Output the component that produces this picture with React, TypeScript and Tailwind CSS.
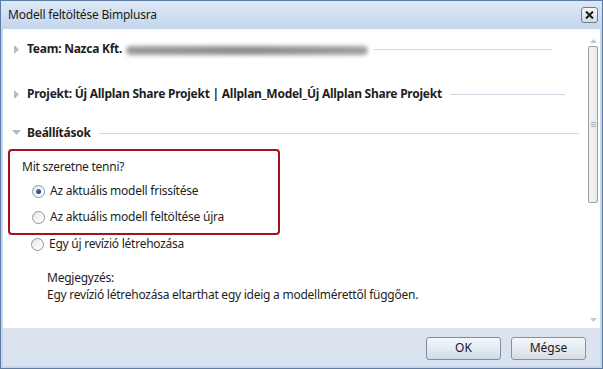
import React from "react";

function Arrow({ open }: { open?: boolean }) {
  return open ? (
    <svg width="9" height="6" viewBox="0 0 9 6" className="shrink-0">
      <path d="M0 0 L9 0 L4.5 5 Z" fill="#b4b9c2" />
    </svg>
  ) : (
    <svg width="5" height="9" viewBox="0 0 5 9" className="shrink-0">
      <path d="M0 0 L5 4.5 L0 9 Z" fill="#b4b9c2" />
    </svg>
  );
}

function Radio({ checked, label }: { checked?: boolean; label: string }) {
  return (
    <div className="flex items-center gap-[5px] h-[20px]">
      <div className="w-[13px] h-[13px] rounded-full border border-[#8d949e] bg-gradient-to-br from-[#dfe3e8] via-[#f3f4f6] to-[#ffffff] flex items-center justify-center shadow-[inset_0_0_1px_#ffffff]">
        {checked ? (
          <div className="w-[5px] h-[5px] rounded-full bg-gradient-to-br from-[#5a7fb8] to-[#1a3566]" />
        ) : null}
      </div>
      <span>{label}</span>
    </div>
  );
}

function SectionHeader({
  label,
  open,
  lineStart,
  lineEnd,
  children,
}: {
  label: string;
  open?: boolean;
  lineStart?: string;
  lineEnd: string;
  children?: React.ReactNode;
}) {
  return (
    <div className="flex items-center h-[20px]">
      <div className="w-[24px] flex justify-center pl-[2px]">
        <Arrow open={open} />
      </div>
      <span className="font-bold whitespace-nowrap">{label}</span>
      {children}
      <div className={`h-px bg-[#cfd7e2] ${lineStart ?? "ml-[8px]"} ${lineEnd}`} />
    </div>
  );
}

export default function App() {
  return (
    <div
      className="w-[603px] h-[369px] flex flex-col bg-[#c5d6ec] border border-[#5d7ca4] text-[12px] text-[#1e1e1e] overflow-hidden"
      style={{ fontFamily: '"Noto Sans", "Open Sans", sans-serif' }}
    >
      {/* title bar */}
      <div className="h-[28px] shrink-0 flex items-center justify-between pl-[7px] pr-[4px] bg-gradient-to-b from-[#dde8f5] to-[#c5d6ec]">
        <span className="text-[12px] text-[#1a1a1a] tracking-[-0.2px]">Modell feltöltése Bimplusra</span>
        <div className="w-[17px] h-[16px] rounded-[3px] border border-[#6e7c8e] bg-gradient-to-b from-[#f4f7fb] to-[#d3dde9] flex items-center justify-center">
          <svg width="9" height="8" viewBox="0 0 9 8">
            <path d="M1 0.5 L8 7.5 M8 0.5 L1 7.5" stroke="#1a1a1a" strokeWidth="2" />
          </svg>
        </div>
      </div>

      {/* body */}
      <div className="flex-1 flex flex-col mx-[2px] bg-white">
        <div className="flex-1 flex">
          <div className="flex-1 pt-[8px] tracking-[-0.25px]">
            <div className="pt-[2px]">
              <SectionHeader label="Team: Nazca Kft." lineEnd="w-[178px]" lineStart="ml-[6px]">
                <div className="ml-[4px] flex flex-col justify-center mt-[2px]">
                  <div className="w-[242px] h-[9px] rounded-full bg-gradient-to-r from-[#9a9a9a] via-[#8c8c8c] to-[#a0a0a0] blur-[2px]" />
                </div>
              </SectionHeader>
            </div>
            <div className="pt-[25px]">
              <SectionHeader
                label="Projekt: Új Allplan Share Projekt | Allplan_Model_Új Allplan Share Projekt"
                lineEnd="w-[115px]"
              />
            </div>
            <div className="pt-[19px]">
              <SectionHeader label="Beállítások" open lineEnd="w-[480px]" />
            </div>

            <div className="mt-[6px] ml-[5px] w-[272px] h-[86px] border-2 border-[#a8101c] rounded-[4px] pl-[12px] pt-[6px]">
              <div className="h-[20px] flex items-center">Mit szeretne tenni?</div>
              <div className="pl-[10px] pt-[4px] flex flex-col gap-[6px]">
                <Radio checked label="Az aktuális modell frissítése" />
                <Radio label="Az aktuális modell feltöltése újra" />
              </div>
            </div>
            <div className="pl-[28px] -mt-[1px]">
              <Radio label="Egy új revízió létrehozása" />
            </div>
            <div className="pl-[44px] pt-[15px] leading-[17px]">
              <div>Megjegyzés:</div>
              <div>Egy revízió létrehozása eltarthat egy ideig a modellmérettől függően.</div>
            </div>
          </div>

          {/* scrollbar */}
          <div className="w-[14px] shrink-0 flex flex-col items-center pt-[10px] pb-[6px] mr-[0px]">
            <svg width="7" height="4" viewBox="0 0 7 4">
              <path d="M0 4 L3.5 0 L7 4 Z" fill="#c4c8cc" />
            </svg>
            <div className="mt-[3px] w-[10px] h-[157px] rounded-[2px] border border-[#9aa0a8] bg-gradient-to-r from-[#f3f3f3] to-[#e9e9e9] flex items-center justify-center">
              <div className="flex flex-col gap-[1px]">
                <div className="w-[5px] h-px bg-[#b0b4ba]" />
                <div className="w-[5px] h-px bg-[#b0b4ba]" />
                <div className="w-[5px] h-px bg-[#b0b4ba]" />
              </div>
            </div>
            <div className="flex-1" />
            <svg width="7" height="4" viewBox="0 0 7 4">
              <path d="M0 0 L3.5 4 L7 0 Z" fill="#c4c8cc" />
            </svg>
          </div>
        </div>

        {/* footer */}
        <div className="h-[38px] shrink-0 bg-[#dbe3ee] flex items-center justify-end gap-[10px] pr-[14px] pt-[2px]">
          <button className="w-[75px] h-[23px] rounded-[3px] border border-[#7b8ea6] bg-gradient-to-b from-[#f4f7fb] via-[#e4ebf3] to-[#cfdbe8] text-[12px] text-[#1a1a1a]">
            OK
          </button>
          <button className="w-[75px] h-[23px] rounded-[3px] border border-[#8593a5] bg-gradient-to-b from-[#f4f6f9] via-[#e6ebf1] to-[#d3dce7] text-[12px] text-[#1a1a1a]">
            Mégse
          </button>
        </div>
      </div>
      <div className="h-[2px] shrink-0" />
    </div>
  );
}
